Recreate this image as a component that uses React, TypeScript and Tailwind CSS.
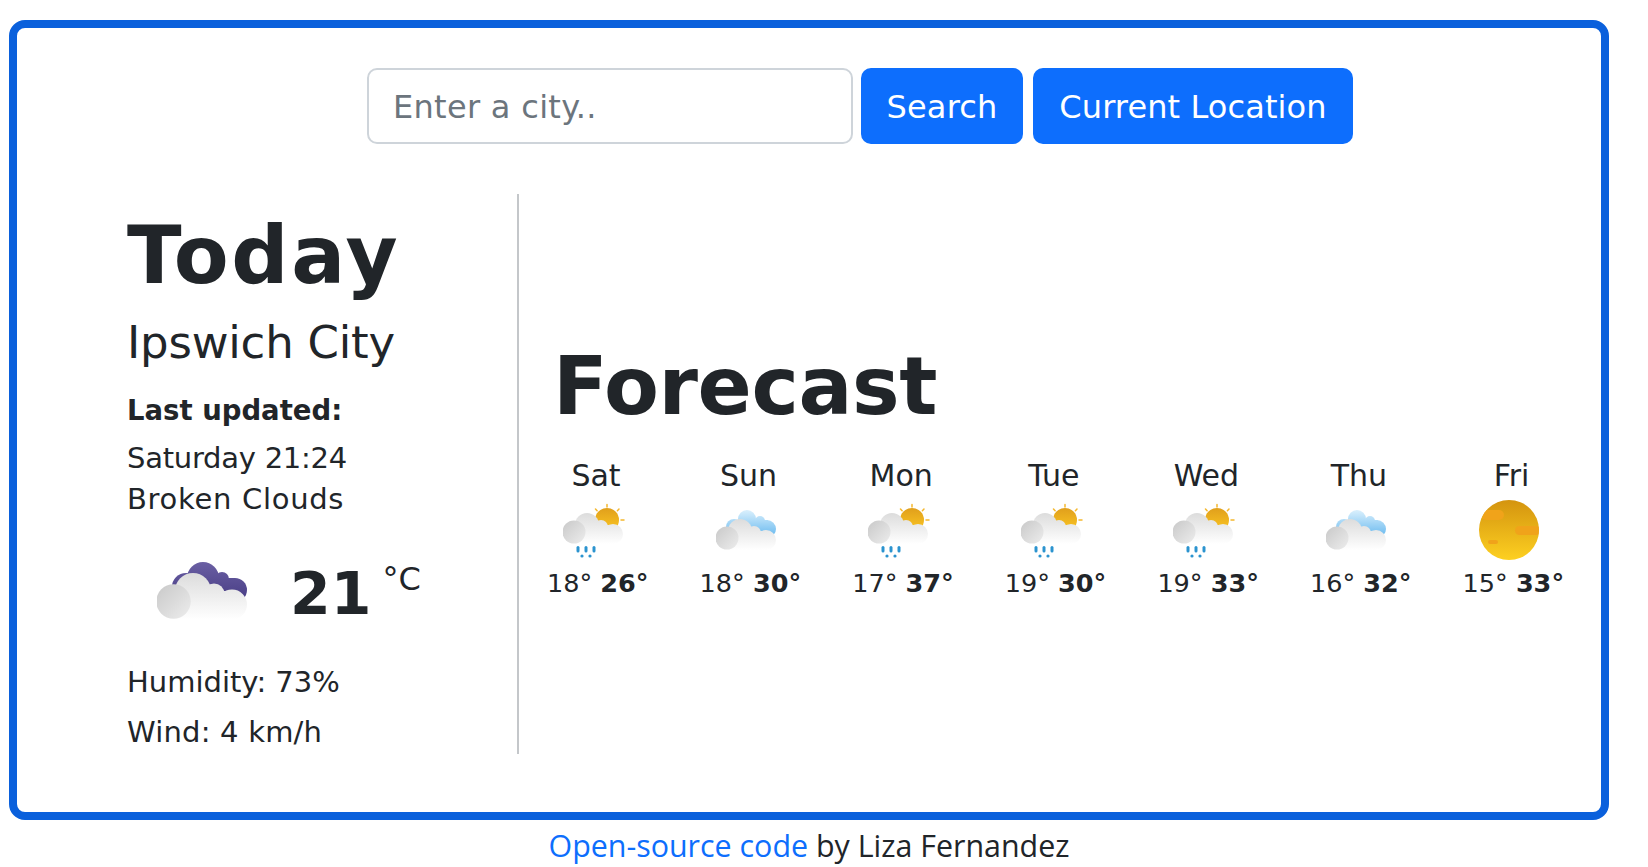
const sans = 'font-["DejaVu_Sans",sans-serif]'

const days = [
  { day: 'Sat', low: 18, high: 26, icon: 'rain' },
  { day: 'Sun', low: 18, high: 30, icon: 'cloudy' },
  { day: 'Mon', low: 17, high: 37, icon: 'rain' },
  { day: 'Tue', low: 19, high: 30, icon: 'rain' },
  { day: 'Wed', low: 19, high: 33, icon: 'rain' },
  { day: 'Thu', low: 16, high: 32, icon: 'cloudy' },
  { day: 'Fri', low: 15, high: 33, icon: 'sun' },
]

// white cloud shared by all the icons, drawn in a 60 wide box
function Cloud({ id }: { id: string }) {
  return (
    <>
      <defs>
        <linearGradient id={id + 'a'} gradientUnits="userSpaceOnUse" x1="0" y1="10" x2="0" y2="41">
          <stop offset="0" stopColor="#dcdcdc" />
          <stop offset="1" stopColor="#ffffff" />
        </linearGradient>
        <linearGradient id={id + 'b'} gradientUnits="userSpaceOnUse" x1="0" y1="18" x2="22" y2="40">
          <stop offset="0" stopColor="#c9c9c9" />
          <stop offset="1" stopColor="#ececec" />
        </linearGradient>
      </defs>
      <g fill={`url(#${id}a)`}>
        <circle cx="24" cy="22" r="12" />
        <circle cx="38" cy="24" r="7" />
        <circle cx="50" cy="31" r="10" />
        <rect x="11" y="22" width="40" height="19" />
      </g>
      <circle cx="11" cy="29" r="11.5" fill={`url(#${id}b)`} />
    </>
  )
}

function WeatherIcon({ type, id }: { type: string; id: string }) {
  if (type === 'sun') {
    return (
      <svg viewBox="0 0 62 62" className="w-[62px] h-[62px]">
        <defs>
          <linearGradient id={id} x1="0" y1="0" x2="0" y2="1">
            <stop offset="0" stopColor="#d4940f" />
            <stop offset="1" stopColor="#fdd021" />
          </linearGradient>
          <clipPath id={id + 'c'}>
            <circle cx="30" cy="30" r="30" />
          </clipPath>
        </defs>
        <circle cx="30" cy="30" r="30" fill={`url(#${id})`} />
        <g clipPath={`url(#${id}c)`} fill="#f0a31a">
          <rect x="2" y="10" width="23" height="10" rx="5" />
          <rect x="36" y="26" width="26" height="9" rx="4.5" />
          <rect x="9" y="40" width="10" height="4" rx="2" />
        </g>
      </svg>
    )
  }
  return (
    <svg viewBox="0 0 62 62" className="w-[62px] h-[62px]">
      <defs>
        <linearGradient id={id + 's'} x1="0" y1="0" x2="0" y2="1">
          <stop offset="0" stopColor="#e09f1c" />
          <stop offset="1" stopColor="#fcc823" />
        </linearGradient>
        <linearGradient id={id + 'c'} gradientUnits="userSpaceOnUse" x1="0" y1="11" x2="0" y2="38">
          <stop offset="0" stopColor="#d6eefc" />
          <stop offset="1" stopColor="#62b6ee" />
        </linearGradient>
      </defs>
      {type === 'rain' && (
        <g>
          <circle cx="44" cy="20" r="12" fill={`url(#${id}s)`} />
          <g stroke="#f5b82e" strokeWidth="1.5" strokeLinecap="round">
            <path d="M44 4.5v2.5M32.5 9l1.6 1.8M56 9l-1.6 1.8M58 20h3" />
          </g>
        </g>
      )}
      {type === 'cloudy' && (
        <g fill={`url(#${id}c)`}>
          <circle cx="18" cy="27" r="8" />
          <circle cx="31" cy="19" r="9" />
          <circle cx="44" cy="21" r="5" />
          <circle cx="51" cy="29" r="9" />
          <rect x="14" y="20" width="38" height="18" />
        </g>
      )}
      <g transform={type === 'rain' ? 'translate(0,3)' : 'translate(0,9)'}>
        <Cloud id={id + 'k'} />
      </g>
      {type === 'rain' && (
        <g fill="#2b93cf">
          <rect x="13.5" y="46" width="3" height="6.5" rx="1.5" />
          <rect x="21.5" y="46" width="3" height="6.5" rx="1.5" />
          <rect x="29.5" y="46" width="3" height="6.5" rx="1.5" />
          <circle cx="19" cy="56" r="1.6" />
          <circle cx="27" cy="56" r="1.6" />
        </g>
      )}
    </svg>
  )
}

function TodayIcon() {
  return (
    <svg viewBox="0 0 96 64" className="w-[96px] h-[64px]">
      <defs>
        <linearGradient id="dusk" gradientUnits="userSpaceOnUse" x1="0" y1="4" x2="0" y2="46">
          <stop offset="0" stopColor="#6a5fa3" />
          <stop offset="1" stopColor="#453a82" />
        </linearGradient>
      </defs>
      <g fill="url(#dusk)">
        <circle cx="29" cy="29" r="14" />
        <circle cx="46" cy="20" r="16" />
        <circle cx="65" cy="21" r="7" />
        <circle cx="78" cy="32" r="12" />
        <rect x="30" y="20" width="48" height="26" />
      </g>
      <g transform="scale(1.5)">
        <Cloud id="today" />
      </g>
    </svg>
  )
}

export default function App() {
  return (
    <div className={`${sans} bg-white text-[#212529] w-[1648px] h-[867px] overflow-hidden`}>
      <div className="ml-[9px] mt-[20px] w-[1600px] h-[800px] border-[8px] border-[#0a60dc] rounded-[16px] flex flex-col">
        <form className="flex justify-center mt-[40px] ml-[102px] h-[76px]">
          <input
            placeholder="Enter a city.."
            className="w-[486px] h-[76px] mr-[8px] px-[24px] pt-[1px] border-2 border-[#ced4da] rounded-[10px] text-[32px] tracking-[0.3px] text-[#212529] placeholder:text-[#6c757d] outline-none"
          />
          <button type="button" className="w-[162px] mr-[10px] pt-[1px] bg-[#0d6efd] text-white text-[32px] tracking-[0.2px] rounded-[10px]">
            Search
          </button>
          <button type="button" className="w-[320px] pt-[1px] bg-[#0d6efd] text-white text-[32px] tracking-[0.1px] rounded-[10px]">
            Current Location
          </button>
        </form>

        <div className="flex mt-[50px] h-[560px]">
          <div className="w-[502px] pl-[110px] border-r-2 border-[#c4c7ca] shrink-0">
            <h1 className="text-[80px] font-bold leading-[96px] mt-[14px] tracking-[2.7px]">Today</h1>
            <div className="text-[45px] leading-[54px] mt-[12px] tracking-[-0.2px]">Ipswich City</div>
            <div className="text-[27.5px] font-bold leading-[36px] mt-[22px]">Last updated:</div>
            <div className="text-[29px] leading-[40px] mt-[10px] tracking-[-0.25px]">Saturday 21:24</div>
            <div className="text-[29px] leading-[42px] tracking-[0.7px]">Broken Clouds</div>
            <div className="flex items-start mt-[29px] h-[90px]">
              <div className="ml-[30px] mt-[9px]"><TodayIcon /></div>
              <span className="ml-[37px] mt-[15px] text-[58.5px] font-bold leading-[60px]">21</span>
              <span className="ml-[11px] mt-[15px] text-[32px] leading-[31px]">°C</span>
            </div>
            <div className="text-[29px] leading-[50px] mt-[18px]">Humidity: 73%</div>
            <div className="text-[29px] leading-[50px] tracking-[0.2px]">Wind: 4 km/h</div>
          </div>

          <div className="flex-1 pl-[34px]">
            <h2 className="text-[80px] font-bold leading-[96px] mt-[145px] tracking-[-0.4px]">Forecast</h2>
            <div className="flex mt-[23px] ml-[-6px]">
              {days.map((d, i) => (
                <div key={d.day} className="w-[152.6px] shrink-0 flex flex-col items-start">
                  <div className="w-[98px] text-center text-[30px] leading-[36px]">{d.day}</div>
                  <div className="ml-[16px] mt-[6px] h-[62px]">
                    <WeatherIcon type={d.icon} id={'w' + i} />
                  </div>
                  <div className="text-[25.5px] leading-[36px] mt-[3px] whitespace-nowrap">
                    {d.low}° <b>{d.high}°</b>
                  </div>
                </div>
              ))}
            </div>
          </div>
        </div>
      </div>
      <p className="w-[1618px] pt-[3px] text-center text-[30.4px] leading-[46px] font-['Open_Sans',sans-serif]">
        <a href="#" className="text-[#0d6efd]">Open-source code</a> by Liza Fernandez
      </p>
    </div>
  )
}
